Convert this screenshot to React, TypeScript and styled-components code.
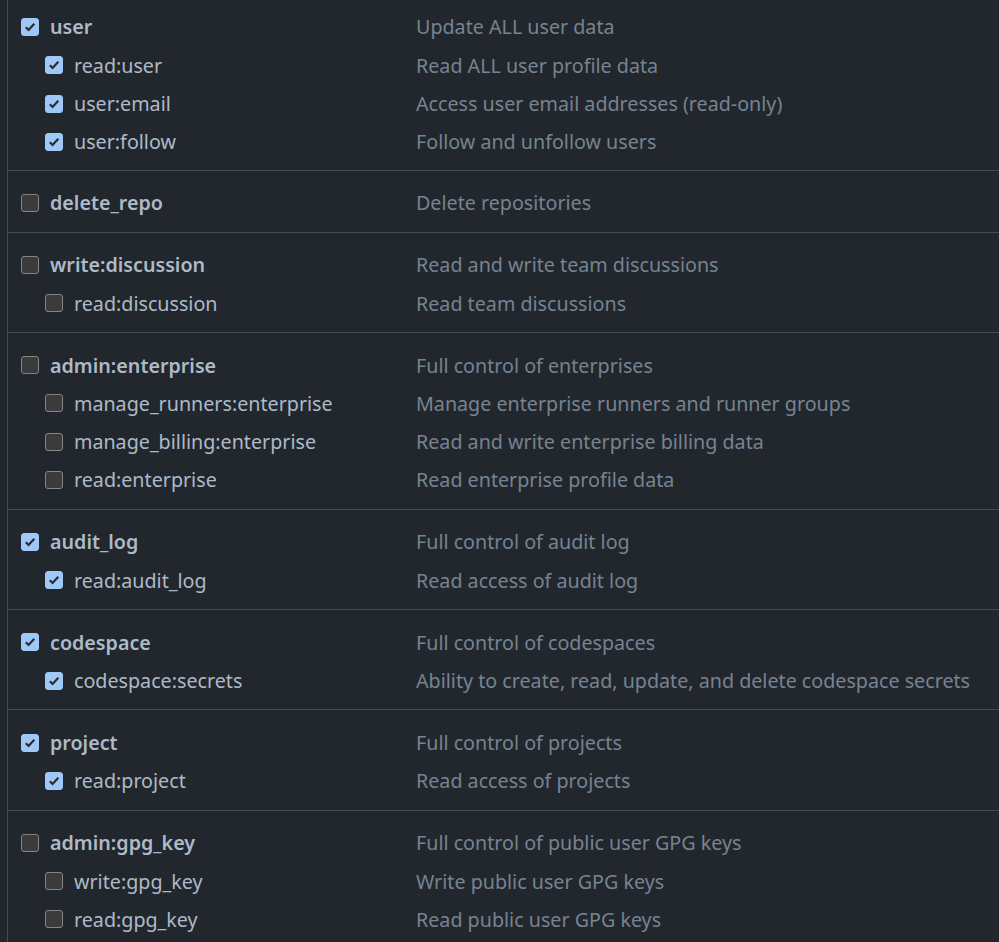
import * as React from "react";
import styled, { createGlobalStyle } from "styled-components";

interface Scope {
  name: string;
  description: string;
  checked: boolean;
  sub?: boolean;
}

const groups: Scope[][] = [
  [
    { name: "user", description: "Update ALL user data", checked: true },
    { name: "read:user", description: "Read ALL user profile data", checked: true, sub: true },
    { name: "user:email", description: "Access user email addresses (read-only)", checked: true, sub: true },
    { name: "user:follow", description: "Follow and unfollow users", checked: true, sub: true },
  ],
  [{ name: "delete_repo", description: "Delete repositories", checked: false }],
  [
    { name: "write:discussion", description: "Read and write team discussions", checked: false },
    { name: "read:discussion", description: "Read team discussions", checked: false, sub: true },
  ],
  [
    { name: "admin:enterprise", description: "Full control of enterprises", checked: false },
    { name: "manage_runners:enterprise", description: "Manage enterprise runners and runner groups", checked: false, sub: true },
    { name: "manage_billing:enterprise", description: "Read and write enterprise billing data", checked: false, sub: true },
    { name: "read:enterprise", description: "Read enterprise profile data", checked: false, sub: true },
  ],
  [
    { name: "audit_log", description: "Full control of audit log", checked: true },
    { name: "read:audit_log", description: "Read access of audit log", checked: true, sub: true },
  ],
  [
    { name: "codespace", description: "Full control of codespaces", checked: true },
    { name: "codespace:secrets", description: "Ability to create, read, update, and delete codespace secrets", checked: true, sub: true },
  ],
  [
    { name: "project", description: "Full control of projects", checked: true },
    { name: "read:project", description: "Read access of projects", checked: true, sub: true },
  ],
  [
    { name: "admin:gpg_key", description: "Full control of public user GPG keys", checked: false },
    { name: "write:gpg_key", description: "Write public user GPG keys", checked: false, sub: true },
    { name: "read:gpg_key", description: "Read public user GPG keys", checked: false, sub: true },
  ],
];

const GlobalStyle = createGlobalStyle`
  html, body {
    margin: 0;
    background: #22272e;
  }
  body {
    font-family: "Noto Sans", "Open Sans", sans-serif;
    color: #adbac7;
    overflow: hidden;
  }
`;

const List = styled.div`
  margin-left: 7px;
  border-left: 1px solid #444c56;
  min-height: 942px;
`;

const Group = styled.div<{ $first?: boolean }>`
  padding: ${(p) => (p.$first ? "7.8px 0 8.7px" : "13px 0 9.7px")} 13px;
  border-bottom: 1px solid #444c56;
`;

const Row = styled.label`
  display: flex;
  align-items: center;
  height: 38.3px;
  font-size: 19.7px;
`;

const Left = styled.div<{ $sub?: boolean }>`
  display: flex;
  align-items: center;
  gap: 11px;
  width: 395px;
  padding-left: ${(p) => (p.$sub ? "24px" : "0")};
  box-sizing: border-box;
`;

const Box = styled.span<{ $checked: boolean }>`
  display: inline-flex;
  align-items: center;
  justify-content: center;
  width: 18px;
  height: 18px;
  box-sizing: border-box;
  border-radius: 3px;
  background: ${(p) => (p.$checked ? "#9dc8f8" : "#3b3b3b")};
  border: 1px solid ${(p) => (p.$checked ? "#9dc8f8" : "#858585")};
  flex-shrink: 0;
`;

const Name = styled.span<{ $sub?: boolean }>`
  font-weight: ${(p) => (p.$sub ? 400 : 600)};
  color: #adbac7;
  white-space: nowrap;
`;

const Desc = styled.span`
  color: #768390;
  white-space: nowrap;
`;

const Check = () => (
  <svg width="12" height="12" viewBox="0 0 12 12">
    <path d="M1.8 6.2 L4.6 9 L10.3 2.8" fill="none" stroke="#2b2b2b" strokeWidth="2.2" />
  </svg>
);

const App: React.FC = () => {
  return (
    <>
      <GlobalStyle />
      <List>
        {groups.map((g, i) => (
          <Group key={i} $first={i === 0}>
            {g.map((s) => (
              <Row key={s.name}>
                <Left $sub={s.sub}>
                  <Box $checked={s.checked}>{s.checked && <Check />}</Box>
                  <Name $sub={s.sub}>{s.name}</Name>
                </Left>
                <Desc>{s.description}</Desc>
              </Row>
            ))}
          </Group>
        ))}
      </List>
    </>
  );
};

export default App;
